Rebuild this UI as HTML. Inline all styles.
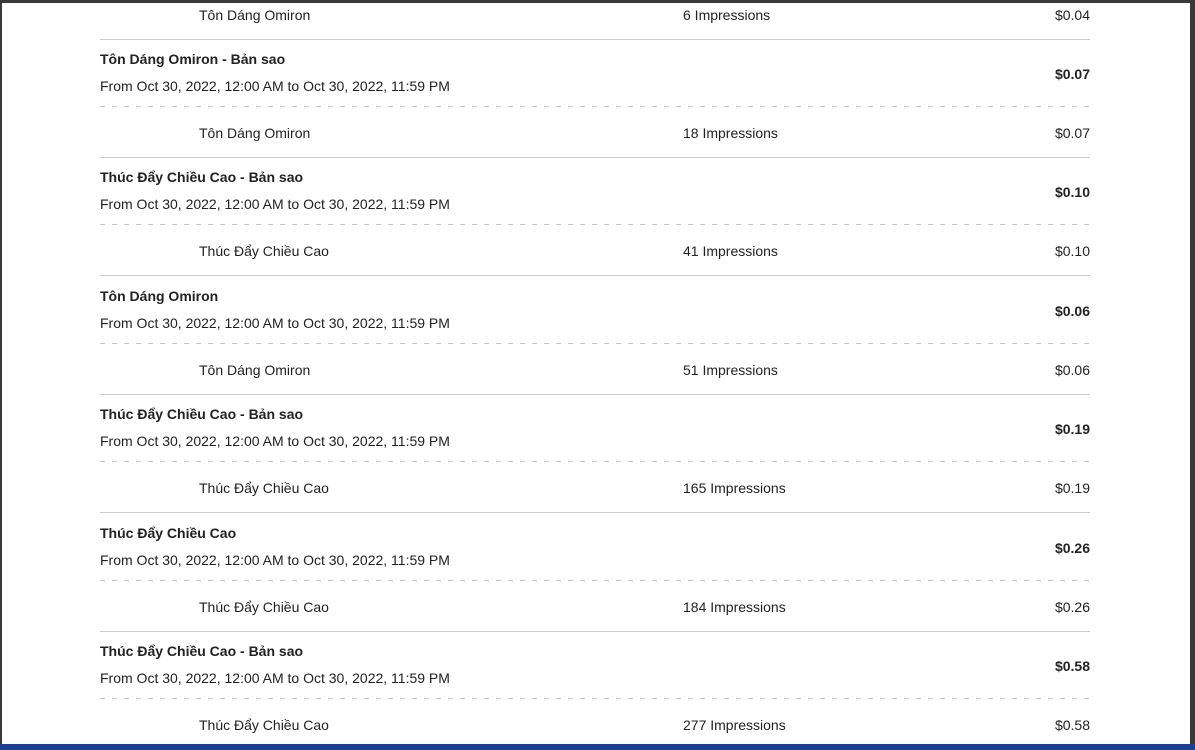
<!DOCTYPE html>
<html><head><meta charset="utf-8"><style>
html,body{margin:0;padding:0}
body{width:1195px;height:750px;position:relative;overflow:hidden;background:#fff;font-family:"Liberation Sans",Arial,sans-serif;color:#222;font-size:14px}
.t{position:absolute;line-height:16px;white-space:nowrap}
.b{font-weight:bold}
.r{right:105px;text-align:right}
.sl{position:absolute;left:100px;width:990px;height:0;border-top:1px solid #ccc}
.dl{position:absolute;left:100px;width:990px;height:1px;background:repeating-linear-gradient(90deg,#c4c4c4 0 5px,transparent 5px 12px)}
</style></head><body>
<div style="position:absolute;left:0;top:0;width:1195px;height:3px;background:#3a3a3a"></div>
<div style="position:absolute;left:0;top:0;width:2px;height:750px;background:#3a3a3a"></div>
<div style="position:absolute;left:1190px;top:0;width:5px;height:750px;background:#3a3a3a"></div>
<div style="position:absolute;left:0;top:744px;width:1195px;height:6px;background:#1a3f8f"></div>
<div class="t" style="left:199px;top:7px">Tôn Dáng Omiron</div>
<div class="t" style="left:683px;top:7px">6 Impressions</div>
<div class="t r" style="top:7px">$0.04</div>
<div class="sl" style="top:39px"></div>
<div id="c"></div>
<script>
var d=[["Tôn Dáng Omiron - Bản sao","Tôn Dáng Omiron","18","$0.07"],
["Thúc Đẩy Chiều Cao - Bản sao","Thúc Đẩy Chiều Cao","41","$0.10"],
["Tôn Dáng Omiron","Tôn Dáng Omiron","51","$0.06"],
["Thúc Đẩy Chiều Cao - Bản sao","Thúc Đẩy Chiều Cao","165","$0.19"],
["Thúc Đẩy Chiều Cao","Thúc Đẩy Chiều Cao","184","$0.26"],
["Thúc Đẩy Chiều Cao - Bản sao","Thúc Đẩy Chiều Cao","277","$0.58"]];
var h="";
d.forEach(function(r,i){var y=59+118.4*i;
h+='<div class="t b" style="left:100px;top:'+(y-8)+'px">'+r[0]+'</div>';
h+='<div class="t" style="left:100px;top:'+(y+19)+'px">From Oct 30, 2022, 12:00 AM to Oct 30, 2022, 11:59 PM</div>';
h+='<div class="t b r" style="top:'+(y+7)+'px">'+r[3]+'</div>';
h+='<div class="dl" style="top:'+(y+47)+'px"></div>';
h+='<div class="t" style="left:199px;top:'+(y+66)+'px">'+r[1]+'</div>';
h+='<div class="t" style="left:683px;top:'+(y+66)+'px">'+r[2]+' Impressions</div>';
h+='<div class="t r" style="top:'+(y+66)+'px">'+r[3]+'</div>';
if(i<5)h+='<div class="sl" style="top:'+(y+98)+'px"></div>';});
document.getElementById("c").innerHTML=h;
</script>
</body></html>
